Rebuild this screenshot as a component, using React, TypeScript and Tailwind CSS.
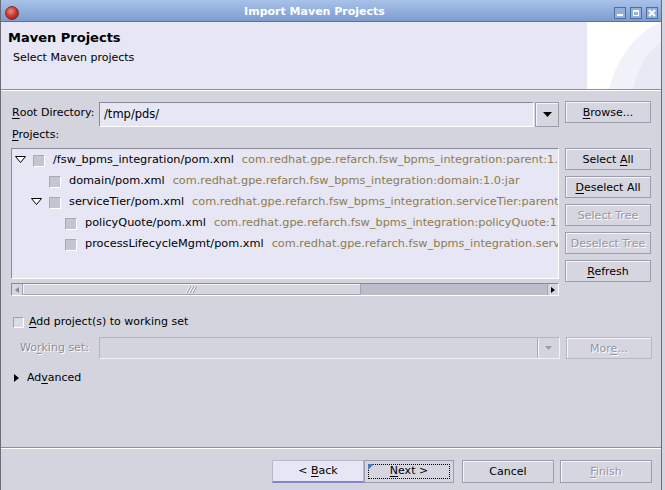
import React from "react";

const U = ({ children }: { children: React.ReactNode }) => <span className="underline underline-offset-[2px]">{children}</span>;

function Btn({ children, disabled, className = "" }: { children: React.ReactNode; disabled?: boolean; className?: string }) {
  return (
    <div
      className={
        "flex items-center justify-center h-[22px] border border-[#9c9caa] bg-[#d6d6e0] shadow-[inset_1px_1px_0_#f4f4fa] leading-none whitespace-nowrap " +
        (disabled ? "text-[#9696a2] [text-shadow:1px_1px_0_#ffffff] " : "text-black ") +
        className
      }
    >
      {children}
    </div>
  );
}

function Tri() {
  return (
    <svg width="11" height="7" viewBox="0 0 11 7">
      <polygon points="0.5,0.5 10.5,0.5 5.5,6.5" fill="#ffffff" stroke="#000" strokeWidth="1" />
    </svg>
  );
}

const rows = [
  { level: 0, exp: true, name: "/fsw_bpms_integration/pom.xml", id: "com.redhat.gpe.refarch.fsw_bpms_integration:parent:1.0:pom" },
  { level: 1, exp: false, name: "domain/pom.xml", id: "com.redhat.gpe.refarch.fsw_bpms_integration:domain:1.0:jar" },
  { level: 1, exp: true, name: "serviceTier/pom.xml", id: "com.redhat.gpe.refarch.fsw_bpms_integration.serviceTier:parent:1.0:pom" },
  { level: 2, exp: false, name: "policyQuote/pom.xml", id: "com.redhat.gpe.refarch.fsw_bpms_integration:policyQuote:1.0:jar" },
  { level: 2, exp: false, name: "processLifecycleMgmt/pom.xml", id: "com.redhat.gpe.refarch.fsw_bpms_integration.serviceTier:processLifecycleMgmt:1.0:jar" },
];

export default function App() {
  return (
    <div className="w-[665px] h-[490px] overflow-hidden bg-[#d4d4de] flex font-['DejaVu_Sans',sans-serif] text-[11px] text-black">
      {/* window */}
      <div className="w-[662px] h-full flex flex-col border-l border-r border-[#6c6c74] bg-[#d4d4de]">
        {/* title bar */}
        <div className="h-[22px] pt-[4px] flex items-center border-b border-[#55739f] bg-[linear-gradient(#a8c2ea,#7d9ccf)]">
          <div className="w-[20px] pl-[4px] flex items-center">
            <div className="w-[14px] h-[14px] rounded-full bg-[radial-gradient(circle_at_40%_35%,#f08a80,#c0302a_55%,#7a1410)] border border-[#8a2a22]" />
          </div>
          <div className="flex-1 text-center text-white font-bold text-[11px] pr-[6px]">Import Maven Projects</div>
          <div className="flex gap-[4px] pr-[3px]">
            <div className="w-[12px] h-[12px] border border-[#4f6fa2] bg-[#93b0dc] flex items-end justify-center pb-[2px]">
              <div className="w-[6px] h-[2px] bg-white" />
            </div>
            <div className="w-[12px] h-[12px] border border-[#4f6fa2] bg-[#93b0dc] flex items-center justify-center">
              <div className="w-[6px] h-[6px] border border-white border-t-2" />
            </div>
            <div className="w-[12px] h-[12px] border border-[#4f6fa2] bg-[#93b0dc] flex items-center justify-center">
              <svg width="8" height="8" viewBox="0 0 8 8">
                <path d="M1 1 L7 7 M7 1 L1 7" stroke="#fff" strokeWidth="2" />
              </svg>
            </div>
          </div>
        </div>

        {/* header */}
        <div className="h-[67px] flex bg-[#e6e6f5]">
          <div className="flex-1 pl-[7px] pt-[8px]">
            <div className="font-bold text-[13px] leading-[16px]">Maven Projects</div>
            <div className="mt-[5px] ml-[5px] leading-[14px]">Select Maven projects</div>
          </div>
          <div className="w-[74px] h-full bg-white relative overflow-hidden">
            <svg width="74" height="67" viewBox="0 0 74 67" className="absolute inset-0">
              <path d="M74 0 C50 10 30 35 22 67 L74 67 Z" fill="#f1f1f9" />
              <path d="M74 20 C60 30 50 48 46 67 L74 67 Z" fill="#e9e9f5" />
            </svg>
          </div>
        </div>
        <div className="h-[2px] border-t border-[#8e8e98] border-b border-b-white" />

        {/* body */}
        <div className="flex-1 flex flex-col pl-[10px] pr-[9px] pt-[10px]">
          {/* root directory */}
          <div className="flex items-start h-[26px]">
            <div className="w-[88px] h-[24px] flex items-center pl-[1px]">
              <U>R</U>oot Directory:
            </div>
            <div className="mt-[1px] flex h-[25px] w-[460px]">
              <div className="flex-1 flex items-center pl-[4px] bg-[#e6e6f5] border-t border-l border-[#8a8a96] border-b border-r border-b-white border-r-white text-[11.5px]">
                /tmp/pds/
              </div>
              <div className="ml-[1px] w-[24px] h-[25px] flex items-center justify-center border border-[#9c9caa] bg-[#d6d6e0] shadow-[inset_1px_1px_0_#f4f4fa]">
                <svg width="9" height="5" viewBox="0 0 9 5"><polygon points="0,0 9,0 4.5,5" fill="#000" /></svg>
              </div>
            </div>
            <Btn className="ml-[6px] w-[86px]">
              <span><U>B</U>rowse...</span>
            </Btn>
          </div>

          <div className="mt-[1px] h-[20px] leading-[14px] pl-[1px]">
            <U>P</U>rojects:
          </div>

          {/* tree + buttons */}
          <div className="flex items-start">
            <div className="w-[548px] flex flex-col">
              <div className="h-[131px] bg-[#e6e6f5] border-t border-l border-[#8a8a96] border-b border-r border-b-white border-r-white overflow-hidden pt-[1px] pl-[1px] text-[11.3px]">
                {rows.map((r, i) => (
                  <div key={i} className="h-[21px] flex items-center whitespace-nowrap">
                    <div style={{ width: r.level * 16 }} className="shrink-0" />
                    <div className="w-[20px] shrink-0 pl-[2px] flex items-center -mt-[3px]">{r.exp ? <Tri /> : null}</div>
                    <div className="w-[12px] h-[12px] shrink-0 bg-[#c5c5d1] border-t border-l border-[#a9a9b5] border-b border-r border-b-white border-r-white" />
                    <span className="ml-[8px]">{r.name}</span>
                    <span className="ml-[8px] text-[#8f7b4c]">{r.id}</span>
                  </div>
                ))}
              </div>
              {/* scrollbar */}
              <div className="mt-[4px] h-[13px] flex border-t border-l border-[#8a8a96] border-b border-r border-b-white border-r-white bg-[#bdbdc9]">
                <div className="w-[11px] h-full bg-[#d6d6e0] border-r border-[#a4a4b0] flex items-center justify-center">
                  <svg width="4" height="6" viewBox="0 0 4 6"><polygon points="4,0 4,6 0,3" fill="#8a8a96" /></svg>
                </div>
                <div className="w-[338px] h-full bg-[#d6d6e0] border-r border-b border-[#a4a4b0] shadow-[inset_1px_1px_0_#f4f4fa] flex items-center justify-center relative">
                  <svg width="12" height="10" viewBox="0 0 12 10" className="-ml-[2px]">
                    <path d="M1 9 L5 2 M4 9 L8 2 M7 9 L11 2" stroke="#fff" strokeWidth="1" />
                    <path d="M2 9 L6 2 M5 9 L9 2 M8 9 L12 2" stroke="#9a9aa6" strokeWidth="1" />
                  </svg>
                </div>
                <div className="flex-1" />
                <div className="w-[11px] h-full bg-[#d6d6e0] border-l border-[#a4a4b0] flex items-center justify-center">
                  <svg width="4" height="6" viewBox="0 0 4 6"><polygon points="0,0 0,6 4,3" fill="#000" /></svg>
                </div>
              </div>
            </div>
            <div className="ml-[6px] w-[86px] flex flex-col gap-[6px]">
              <Btn><span>Select <U>A</U>ll</span></Btn>
              <Btn><span><U>D</U>eselect All</span></Btn>
              <Btn disabled><span>Select Tree</span></Btn>
              <Btn disabled><span>Deselect Tree</span></Btn>
              <Btn><span><U>R</U>efresh</span></Btn>
            </div>
          </div>

          {/* working set */}
          <div className="mt-[18px] h-[16px] flex items-center pl-[2px]">
            <div className="w-[11px] h-[11px] bg-[#dcdce6] border border-[#a0a0ac] border-b-white border-r-white" />
            <span className="ml-[5px]"><U>A</U>dd project(s) to working set</span>
          </div>
          <div className="mt-[7px] h-[22px] flex items-center">
            <div className="w-[88px] pl-[9px] text-[#8e8e98] [text-shadow:1px_1px_0_#ffffff]">
              Wo<U>r</U>king set:
            </div>
            <div className="w-[461px] h-[22px] flex border border-[#f2f2f8] border-t-[#b4b4c0] border-l-[#b4b4c0]">
              <div className="flex-1" />
              <div className="w-[22px] h-full flex items-center justify-center border-l border-[#a8a8b4] shadow-[inset_1px_0_0_#f4f4fa]">
                <svg width="7" height="4" viewBox="0 0 7 4"><polygon points="0,0 7,0 3.5,4" fill="#9a9aa6" /></svg>
              </div>
            </div>
            <Btn disabled className="ml-[6px] w-[86px] border-[#b8b8c4]">
              <span>Mor<U>e</U>...</span>
            </Btn>
          </div>
          <div className="mt-[11px] h-[16px] flex items-center pl-[3px]">
            <svg width="5" height="8" viewBox="0 0 5 8"><polygon points="0,0 5,4 0,8" fill="#000" /></svg>
            <span className="ml-[8px]">Ad<U>v</U>anced</span>
          </div>
        </div>

        {/* bottom */}
        <div className="h-[2px] border-t border-[#8e8e98] border-b border-b-white" />
        <div className="h-[41px] flex items-start justify-end pr-[9px] pt-[11px]">
          <div className="w-[92px] h-[23px] flex items-center justify-center bg-[#e6e6f5] border border-[#b8b8cc] border-b-[#8484d4] border-b-2">
            <span>&lt; <U>B</U>ack</span>
          </div>
          <div className="w-[90px] h-[23px] relative flex items-center justify-center border border-[#9c9caa] bg-[#d6d6e0]">
            <div className="absolute inset-[3px] border border-dotted border-black" />
            <svg width="6" height="6" viewBox="0 0 6 6" className="absolute top-[3px] left-[3px]">
              <polygon points="0,0 6,0 0,6" fill="#4a78b8" />
            </svg>
            <span><U>N</U>ext &gt;</span>
          </div>
          <Btn className="ml-[8px] w-[92px] h-[23px]">
            <span>Cancel</span>
          </Btn>
          <Btn disabled className="ml-[6px] w-[92px] h-[23px]">
            <span><U>F</U>inish</span>
          </Btn>
        </div>
      </div>
      <div className="flex-1 bg-[#d4d4de]" />
    </div>
  );
}
